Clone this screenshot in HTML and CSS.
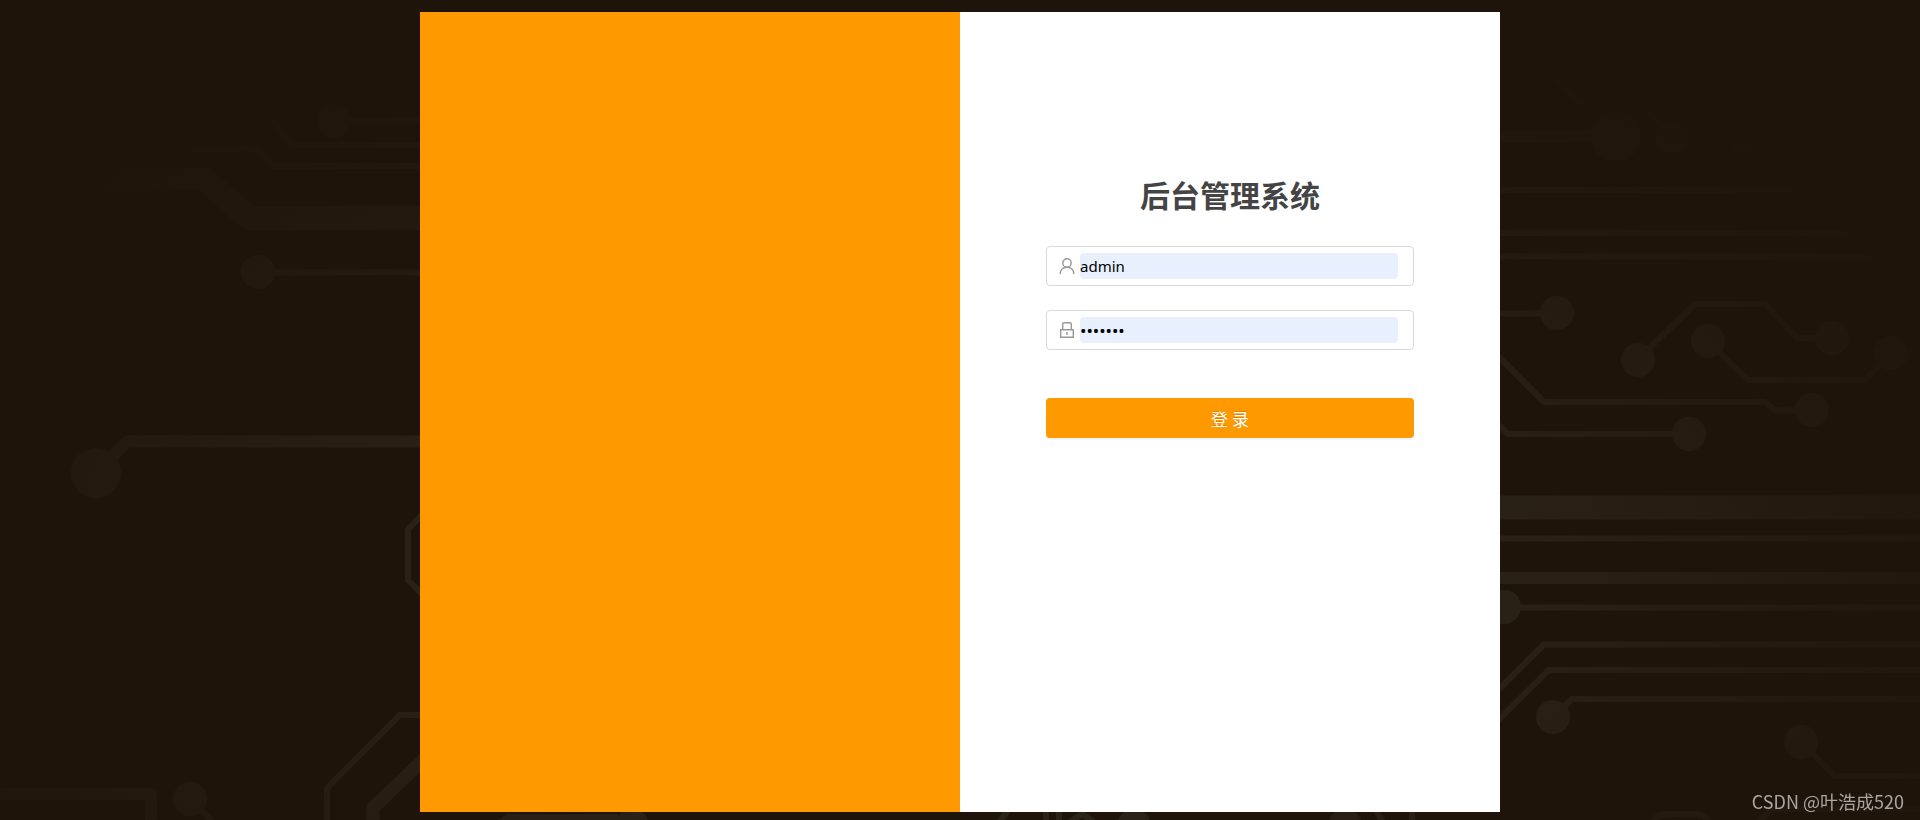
FILE: index.html
```html
<!DOCTYPE html>
<html lang="zh-CN">
<head>
  <meta charset="UTF-8">
  <meta name="viewport" content="width=device-width, initial-scale=1.0">
  <title>后台管理系统</title>
  <link rel="stylesheet" href="styles.css">
</head>
<body>

<div class="page">
  <!-- 电路板背景 -->
  <svg class="circuit" viewBox="0 0 1920 820" preserveAspectRatio="xMidYMid slice" aria-hidden="true">
    <defs>
      <radialGradient id="glow" gradientUnits="userSpaceOnUse" cx="0" cy="0" r="1" gradientTransform="translate(960 580) scale(1200 610)">
        <stop offset="0.4" stop-color="#2b2218"/>
        <stop offset="0.75" stop-color="#24190f"/>
        <stop offset="1" stop-color="#1e140a"/>
      </radialGradient>
    </defs>
    <g fill="none" stroke="url(#glow)" stroke-width="6" stroke-linejoin="round">
      <!-- 左侧 -->
      <path d="M333 120.500H440"/>
      <path d="M165 129l22-13h81l23 29h149"/>
      <path d="M137 142l8 7h111l18 17h166"/>
      <path d="M40 190l24-11h141l44 39h191" stroke-width="24"/>
      <path d="M258 272.500H440"/>
      <path d="M96 473l31-31.500h313" stroke-width="12"/>
      <path d="M430 507l-22 22v51l22 22"/>
      <path d="M440 715h-40l-73 73v40"/>
      <path d="M440 744l-67 64v20" stroke-width="13"/>
      <path d="M0 794h151v34" stroke-width="12"/>
      <path d="M190 799l30 30"/>
      <!-- 右侧 -->
      <path d="M1480 62h50q8 0 14 6l38 36h58l32 34"/>
      <path d="M1480 136.500h136" stroke-width="12"/>
      <path d="M1480 190h370M1480 233h440M1480 256.500h440"/>
      <path d="M1480 313.500h77"/>
      <path d="M1638 359l57-55h70l32 34h35"/>
      <path d="M1708 341l40 39h117l26-27"/>
      <path d="M1480 338l64 64h221l10 8.500h37"/>
      <path d="M1480 406l28 28h181"/>
      <path d="M1480 507.500h440" stroke-width="24"/>
      <path d="M1480 538.500h440"/>
      <path d="M1480 578h440" stroke-width="12"/>
      <path d="M1504 607.500h416"/>
      <path d="M1480 708l64-63.500h376"/>
      <path d="M1480 738l69-68h371"/>
      <path d="M1553 717l19-18h348"/>
      <path d="M1801 742l34 34h85"/>
      <path d="M1650 826q6-12 17-12h28q11 0 17 12"/>
      <path d="M1758 822l14-13h148"/>
      <!-- 底部 -->
      <path d="M498 824l10-7h110M998 824l22-30M1046 800v24M1059 800v24M1370 800l14 24M1412 800v24"/>
      <path d="M1070 822l12-8 12 8M1082 800v18"/>
    </g>
    <g fill="url(#glow)">
      <circle cx="334" cy="121" r="17"/>
      <circle cx="258" cy="272" r="17"/>
      <circle cx="96" cy="473" r="25"/>
      <circle cx="190" cy="799" r="17"/>
      <circle cx="1672" cy="138" r="17"/>
      <circle cx="1616" cy="136" r="25"/>
      <circle cx="1745" cy="138" r="16"/>
      <circle cx="1557" cy="313" r="17"/>
      <circle cx="1638" cy="360" r="17"/>
      <circle cx="1832" cy="338" r="17"/>
      <circle cx="1708" cy="341" r="17"/>
      <circle cx="1891" cy="353" r="17"/>
      <circle cx="1812" cy="410" r="17"/>
      <circle cx="1689" cy="434" r="17"/>
      <circle cx="1504" cy="607" r="17"/>
      <circle cx="1553" cy="717" r="17"/>
      <circle cx="1801" cy="742" r="17"/>
      <circle cx="632" cy="826" r="17"/>
      <circle cx="1134" cy="826" r="17"/>
      <circle cx="1345" cy="826" r="17"/>
    </g>
  </svg>

  <main class="login">
    <div class="login-banner"></div>

    <div class="login-panel">
      <form class="login-form">
        <h1>后台管理系统</h1>

        <label class="field">
          <svg class="icon" viewBox="0 0 16 16" aria-hidden="true">
            <circle cx="8" cy="5" r="4.200"/>
            <path d="M1.200 16c0-4 2.700-6.800 6.800-6.800s6.800 2.800 6.800 6.800"/>
          </svg>
          <input type="text" name="username" value="admin" aria-label="用户名">
        </label>

        <label class="field">
          <svg class="icon" viewBox="0 0 16 16" aria-hidden="true">
            <path d="M1.700 7.700h12.600v7.600H1.700zM3.700 7.700V2.200q0-1.500 1.500-1.500h5.600q1.500 0 1.500 1.500v5.500M8 10v3"/>
          </svg>
          <input type="password" name="password" value="1234567" aria-label="密码">
        </label>

        <button type="submit">登 录</button>
      </form>
    </div>
  </main>
</div>

<div class="watermark">CSDN @叶浩成520</div>

</body>
</html>
```
FILE: styles.css
```css
* {
  margin: 0;
  padding: 0;
  box-sizing: border-box;
}
body {
  font-family: "Noto Sans", "Noto Sans CJK SC", sans-serif;
  background-color: #1e140a;
  color: #444;
}

/* 背景和登录框叠放在同一格 */
.page {
  display: grid;
  grid-template-columns: 100%;
  grid-template-rows: 100%;
  height: 100vh;
  min-height: 520px;
  overflow: hidden;
}
.circuit {
  grid-area: 1 / 1;
  width: 100%;
  height: 100%;
}
.login {
  grid-area: 1 / 1;
  display: grid;
  grid-template-columns: 1fr 1fr;
  width: 100%;
  max-width: 1080px;
  margin: 12px auto 8px;
  z-index: 1;
}
.login-banner {
  background-color: #ff9900;
}
.login-panel {
  padding: 158px 24px 24px;
  background-color: #fff;
}
.login-form {
  max-width: 368px;
  margin: 0 auto;
}
.login-form h1 {
  margin-bottom: 28px;
  font-family: "Noto Sans CJK SC", sans-serif;
  font-size: 30px;
  line-height: 48px;
  text-align: center;
}

.field {
  display: flex;
  align-items: center;
  gap: 5px;
  height: 40px;
  margin-bottom: 24px;
  padding: 0 15px 0 12px;
  border: 1px solid #d9d9d9;
  border-radius: 4px;
}
.icon {
  flex: none;
  width: 16px;
  height: 16px;
  fill: none;
  stroke: #999;
  stroke-width: 1.4;
}
.field input {
  flex: 1;
  min-width: 0;
  height: 26px;
  border: none;
  border-radius: 4px;
  outline: none;
  background-color: #e8f0fe;
  color: #000;
  font-family: inherit;
  font-size: 15px;
}
.field input[type="password"] {
  font-size: 17px;
}
.login-form button {
  width: 100%;
  height: 40px;
  margin-top: 24px;
  border: none;
  border-radius: 4px;
  background-color: #ff9900;
  box-shadow: 0 2px 0 rgba(0, 0, 0, 0.04);
  color: #fff;
  font-family: "Noto Sans CJK SC", sans-serif;
  font-size: 17px;
  text-shadow: 0 -1px 0 rgba(0, 0, 0, 0.12);
  cursor: pointer;
}

.watermark {
  position: fixed;
  right: 16px;
  bottom: 6px;
  z-index: 2;
  color: #aaa7a3;
  font-family: "Noto Sans CJK SC", sans-serif;
  font-size: 18px;
  line-height: 26px;
}
```
